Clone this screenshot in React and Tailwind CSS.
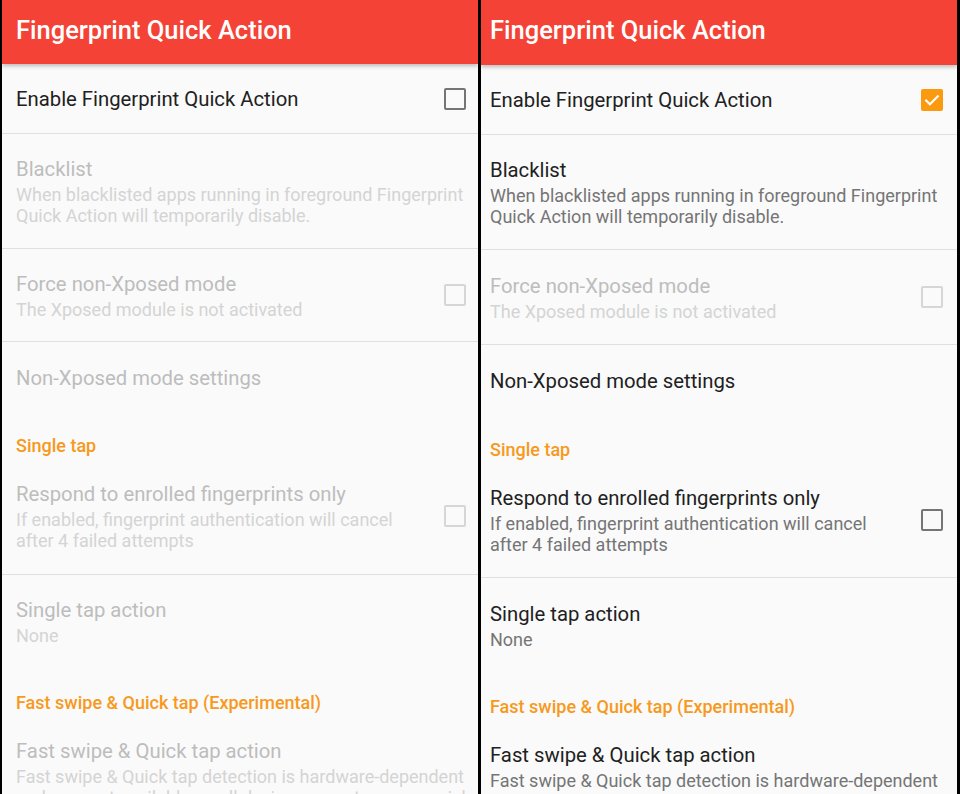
import React from "react";

const font = { fontFamily: "Roboto, 'Noto Sans', sans-serif" };

const Checkbox = ({ checked, disabled }) => {
  if (checked) {
    return (
      <div className="flex h-[22px] w-[22px] shrink-0 items-center justify-center rounded-[2px] bg-[#fb9a0e]">
        <svg viewBox="0 0 24 24" className="h-[20px] w-[20px]" fill="none">
          <path d="M5 12.5l4.5 4.5L19 7.5" stroke="#fff" strokeWidth="2.6" strokeLinecap="square" />
        </svg>
      </div>
    );
  }
  return (
    <div
      className={`h-[22px] w-[22px] shrink-0 rounded-[2px] border-[2.5px] ${
        disabled ? "border-[#d6d6d6]" : "border-[#757575]"
      }`}
    />
  );
};

const Divider = () => <div className="h-px w-full shrink-0 bg-[#e0e0e0]" />;

const Row = ({ title, summary, checkbox, checked, disabled, pad, px }) => (
  <div className={`flex shrink-0 items-center ${pad} ${px}`}>
    <div className="flex-1 min-w-0">
      <div
        className={`text-[20.3px] leading-[28px] whitespace-nowrap ${
          disabled ? "text-[#bdbdbd]" : "text-[#212121]"
        }`}
      >
        {title}
      </div>
      {summary && (
        <div
          className={`mt-[1px] text-[18px] leading-[21px] whitespace-nowrap ${
            disabled ? "text-[#d4d4d4]" : "text-[#757575]"
          }`}
        >
          {summary.map((line, i) => (
            <div key={i}>{line}</div>
          ))}
        </div>
      )}
    </div>
    {checkbox && <Checkbox checked={checked} disabled={disabled} />}
  </div>
);

const Category = ({ label, pad, px }) => (
  <div className={`shrink-0 ${pad} ${px} text-[18px] leading-[22px] font-medium text-[#f7991c]`}>{label}</div>
);

const Panel = ({ enabled, px, header, pads }) => {
  const off = !enabled;
  return (
    <div className="relative flex w-[476px] flex-col overflow-hidden bg-[#fafafa]" style={font}>
      <div
        className={`${header} ${px} relative z-10 flex shrink-0 items-center bg-[#f44336] shadow-[0_2px_4px_rgba(0,0,0,0.25)]`}
      >
        <span className="pb-[4px] text-[25.5px] font-medium text-white">Fingerprint Quick Action</span>
      </div>
      <Row px={px} pad={pads[0]} title="Enable Fingerprint Quick Action" checkbox checked={enabled} />
      <Divider />
      <Row
        px={px}
        pad={pads[1]}
        disabled={off}
        title="Blacklist"
        summary={[
          "When blacklisted apps running in foreground Fingerprint",
          "Quick Action will temporarily disable.",
        ]}
      />
      <Divider />
      <Row
        px={px}
        pad={pads[2]}
        disabled
        title="Force non-Xposed mode"
        summary={["The Xposed module is not activated"]}
        checkbox
      />
      <Divider />
      <Row px={px} pad={pads[3]} disabled={off} title="Non-Xposed mode settings" />
      <Category px={px} pad={pads[4]} label="Single tap" />
      <Row
        px={px}
        pad={pads[5]}
        disabled={off}
        title="Respond to enrolled fingerprints only"
        summary={["If enabled, fingerprint authentication will cancel", "after 4 failed attempts"]}
        checkbox
      />
      <Divider />
      <Row px={px} pad={pads[6]} disabled={off} title="Single tap action" summary={["None"]} />
      <Category px={px} pad={pads[7]} label="Fast swipe & Quick tap (Experimental)" />
      <Row
        px={px}
        pad={pads[8]}
        disabled={off}
        title="Fast swipe & Quick tap action"
        summary={[
          "Fast swipe & Quick tap detection is hardware-dependent",
          "and may not available on all devices, use at your own risk",
        ]}
      />
    </div>
  );
};

export default function App() {
  return (
    <div className="flex h-[794px] w-[960px] gap-[3px] overflow-hidden bg-black pl-[2px] pr-[3px]">
      <Panel
        enabled={false}
        px="pl-[14px] pr-[12px]"
        header="h-[64px]"
        pads={[
          "pt-[21px] pb-[20px]",
          "pt-[21px] pb-[22px]",
          "pt-[21px] pb-[21px]",
          "pt-[22px] pb-[21px]",
          "pt-[22px] pb-[2px]",
          "pt-[21px] pb-[23px]",
          "pt-[21px] pb-[21px]",
          "pt-[25px] pb-[2px]",
          "pt-[21px] pb-[21px]",
        ]}
      />
      <Panel
        enabled
        px="pl-[9px] pr-[14px]"
        header="h-[65px]"
        pads={[
          "pt-[21px] pb-[20px]",
          "pt-[21px] pb-[22px]",
          "pt-[22px] pb-[22px]",
          "pt-[22px] pb-[21px]",
          "pt-[23px] pb-[2px]",
          "pt-[21px] pb-[22px]",
          "pt-[22px] pb-[21px]",
          "pt-[25px] pb-[2px]",
          "pt-[21px] pb-[21px]",
        ]}
      />
    </div>
  );
}
